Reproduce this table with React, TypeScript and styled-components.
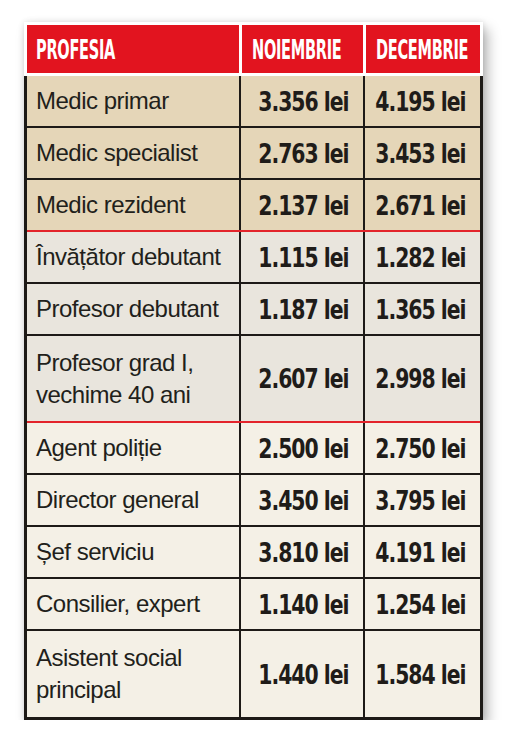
import React from 'react';
import styled, { createGlobalStyle } from 'styled-components';

const GlobalStyle = createGlobalStyle`
  html, body {
    margin: 0;
    padding: 0;
    background: #ffffff;
  }
`;

interface ISalaryRow {
  job: string[];
  nov: string;
  dec: string;
  tone: 'medic' | 'teacher' | 'other';
  redLine?: boolean;
}

const rows: ISalaryRow[] = [
  { job: ['Medic primar'], nov: '3.356 lei', dec: '4.195 lei', tone: 'medic' },
  { job: ['Medic specialist'], nov: '2.763 lei', dec: '3.453 lei', tone: 'medic' },
  { job: ['Medic rezident'], nov: '2.137 lei', dec: '2.671 lei', tone: 'medic', redLine: true },
  { job: ['Învățător debutant'], nov: '1.115 lei', dec: '1.282 lei', tone: 'teacher' },
  { job: ['Profesor debutant'], nov: '1.187 lei', dec: '1.365 lei', tone: 'teacher' },
  { job: ['Profesor grad I,', 'vechime 40 ani'], nov: '2.607 lei', dec: '2.998 lei', tone: 'teacher', redLine: true },
  { job: ['Agent poliție'], nov: '2.500 lei', dec: '2.750 lei', tone: 'other' },
  { job: ['Director general'], nov: '3.450 lei', dec: '3.795 lei', tone: 'other' },
  { job: ['Șef serviciu'], nov: '3.810 lei', dec: '4.191 lei', tone: 'other' },
  { job: ['Consilier, expert'], nov: '1.140 lei', dec: '1.254 lei', tone: 'other' },
  { job: ['Asistent social', 'principal'], nov: '1.440 lei', dec: '1.584 lei', tone: 'other' }
];

const toneColours = {
  medic: '#e5d6b8',
  teacher: '#e9e5dd',
  other: '#f4f0e6'
};

const COLUMNS = '212px 124px 117px';

/** Page */
const Page = styled.div`
  padding: 22px 0 0 24px;
`;

/** Table */
const Table = styled.div`
  width: 459px;
  box-shadow: 5px 7px 12px rgba(0, 0, 0, 0.28), 0 0 6px rgba(0, 0, 0, 0.12);
`;

/** Header */
const HeadRow = styled.div`
  display: grid;
  grid-template-columns: ${COLUMNS};
  background: #ffffff;
  border: 3px solid #ffffff;
  box-sizing: border-box;
  width: 459px;
`;

const HeadCell = styled.div<{ first?: boolean }>`
  background: #e2141f;
  height: 48px;
  display: flex;
  align-items: center;
  padding-left: ${props => (props.first ? '9px' : '10px')};
  margin-left: ${props => (props.first ? '0' : '3px')};
  overflow: hidden;
`;

const HeadLabel = styled.span`
  display: inline-block;
  font-family: 'DejaVu Sans Condensed', 'DejaVu Sans', sans-serif;
  font-weight: bold;
  font-size: 27px;
  line-height: 1;
  color: #ffffff;
  transform: scaleX(0.6);
  transform-origin: left center;
  white-space: nowrap;
  letter-spacing: -0.5px;
`;

/** Body */
const Body = styled.div`
  border-left: 3px solid #1d1a17;
  border-right: 3px solid #1d1a17;
  border-bottom: 3px solid #1d1a17;
`;

const BodyRow = styled.div<{ tone: ISalaryRow['tone']; redLine?: boolean; tall?: boolean }>`
  display: grid;
  grid-template-columns: ${COLUMNS};
  height: ${props => (props.tall ? '85px' : '50px')};
  background: ${props => toneColours[props.tone]};
  border-bottom: 2px solid ${props => (props.redLine ? '#e3242b' : '#1d1a17')};
  &:last-child {
    border-bottom: none;
    height: 86px;
  }
`;

const JobCell = styled.div`
  display: flex;
  flex-direction: column;
  justify-content: center;
  padding-left: 9px;
  font-family: 'Liberation Sans', Arial, sans-serif;
  font-size: 24px;
  line-height: 32px;
  color: #221f1b;
  letter-spacing: -0.5px;
`;

const ValueCell = styled.div`
  display: flex;
  align-items: center;
  justify-content: flex-end;
  padding-right: 14px;
  border-left: 2px solid #1d1a17;
`;

const ValueLabel = styled.span`
  display: inline-block;
  font-family: 'DejaVu Sans Condensed', 'DejaVu Sans', sans-serif;
  font-weight: bold;
  font-size: 27px;
  line-height: 1;
  color: #1f1c19;
  letter-spacing: -1.2px;
  transform: scaleX(0.84);
  transform-origin: right center;
  white-space: nowrap;
`;

export default function App() {
  return (
    <Page>
      <GlobalStyle />
      <Table>
        <HeadRow>
          <HeadCell first>
            <HeadLabel>PROFESIA</HeadLabel>
          </HeadCell>
          <HeadCell>
            <HeadLabel>NOIEMBRIE</HeadLabel>
          </HeadCell>
          <HeadCell>
            <HeadLabel>DECEMBRIE</HeadLabel>
          </HeadCell>
        </HeadRow>
        <Body>
          {rows.map(row => (
            <BodyRow key={row.job.join(' ')} tone={row.tone} redLine={row.redLine} tall={row.job.length > 1}>
              <JobCell>
                {row.job.map(line => (
                  <span key={line}>{line}</span>
                ))}
              </JobCell>
              <ValueCell>
                <ValueLabel>{row.nov}</ValueLabel>
              </ValueCell>
              <ValueCell>
                <ValueLabel>{row.dec}</ValueLabel>
              </ValueCell>
            </BodyRow>
          ))}
        </Body>
      </Table>
    </Page>
  );
}
